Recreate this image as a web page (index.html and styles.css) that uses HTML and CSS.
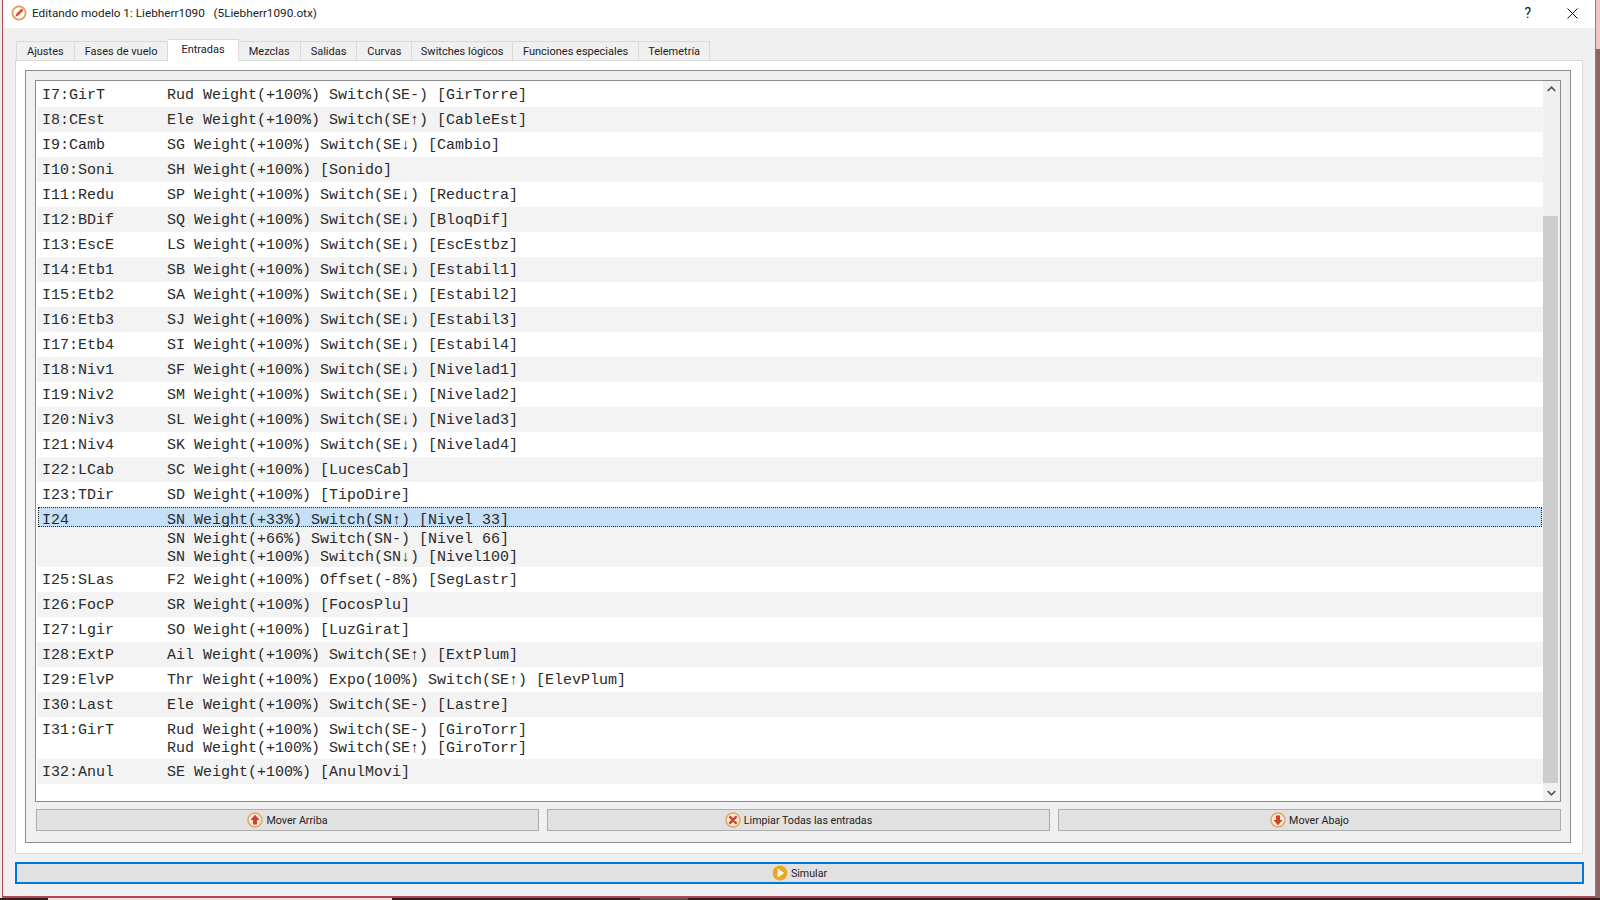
FILE: index.html
```html
<!DOCTYPE html>
<html lang="es">

<head>
    <meta charset="UTF-8">
    <title>Editando modelo 1: Liebherr1090</title>
    <link rel="stylesheet" href="styles.css">
</head>

<body>
    <div class="screen">
        <div class="edge-left"></div>
        <div class="window">
            <div class="titlebar">
                <svg class="app-icon" viewBox="0 0 16 16" width="16" height="16">
                    <circle cx="8" cy="8" r="6.6" fill="#fff" stroke="#e0a050" stroke-width="1.8" />
                    <path d="M4.5 11.5l1-3 5-5 2 2-5 5z" fill="#d9553f" />
                    <path d="M4.5 11.5l.5-1.6 1.1 1.1z" fill="#7a2a20" />
                </svg>
                <span class="title-text">Editando modelo 1: Liebherr1090 &nbsp;&nbsp;(5Liebherr1090.otx)</span>
                <span class="help-btn">?</span>
                <svg class="close-btn" viewBox="0 0 11 11" width="11" height="11">
                    <path d="M0.5 0.5l10 10M10.5 0.5l-10 10" stroke="#111" stroke-width="1" fill="none" />
                </svg>
            </div>

            <div class="client">
                <div class="tabs">
                    <div class="tab">Ajustes</div>
                    <div class="tab">Fases de vuelo</div>
                    <div class="tab active">Entradas</div>
                    <div class="tab">Mezclas</div>
                    <div class="tab">Salidas</div>
                    <div class="tab">Curvas</div>
                    <div class="tab tab-switches">Switches lógicos</div>
                    <div class="tab">Funciones especiales</div>
                    <div class="tab tab-telemetry">Telemetría</div>
                </div>

                <div class="tab-pane">
                    <div class="group">
                        <div class="list-box">
                            <div class="rows">
                                <div class="row"><div class="name">I7:GirT</div><div class="lines"><div>Rud Weight(+100%) Switch(SE-) [GirTorre]</div></div></div>
                                <div class="row"><div class="name">I8:CEst</div><div class="lines"><div>Ele Weight(+100%) Switch(SE↑) [CableEst]</div></div></div>
                                <div class="row"><div class="name">I9:Camb</div><div class="lines"><div>SG Weight(+100%) Switch(SE↓) [Cambio]</div></div></div>
                                <div class="row"><div class="name">I10:Soni</div><div class="lines"><div>SH Weight(+100%) [Sonido]</div></div></div>
                                <div class="row"><div class="name">I11:Redu</div><div class="lines"><div>SP Weight(+100%) Switch(SE↓) [Reductra]</div></div></div>
                                <div class="row"><div class="name">I12:BDif</div><div class="lines"><div>SQ Weight(+100%) Switch(SE↓) [BloqDif]</div></div></div>
                                <div class="row"><div class="name">I13:EscE</div><div class="lines"><div>LS Weight(+100%) Switch(SE↓) [EscEstbz]</div></div></div>
                                <div class="row"><div class="name">I14:Etb1</div><div class="lines"><div>SB Weight(+100%) Switch(SE↓) [Estabil1]</div></div></div>
                                <div class="row"><div class="name">I15:Etb2</div><div class="lines"><div>SA Weight(+100%) Switch(SE↓) [Estabil2]</div></div></div>
                                <div class="row"><div class="name">I16:Etb3</div><div class="lines"><div>SJ Weight(+100%) Switch(SE↓) [Estabil3]</div></div></div>
                                <div class="row"><div class="name">I17:Etb4</div><div class="lines"><div>SI Weight(+100%) Switch(SE↓) [Estabil4]</div></div></div>
                                <div class="row"><div class="name">I18:Niv1</div><div class="lines"><div>SF Weight(+100%) Switch(SE↓) [Nivelad1]</div></div></div>
                                <div class="row"><div class="name">I19:Niv2</div><div class="lines"><div>SM Weight(+100%) Switch(SE↓) [Nivelad2]</div></div></div>
                                <div class="row"><div class="name">I20:Niv3</div><div class="lines"><div>SL Weight(+100%) Switch(SE↓) [Nivelad3]</div></div></div>
                                <div class="row"><div class="name">I21:Niv4</div><div class="lines"><div>SK Weight(+100%) Switch(SE↓) [Nivelad4]</div></div></div>
                                <div class="row"><div class="name">I22:LCab</div><div class="lines"><div>SC Weight(+100%) [LucesCab]</div></div></div>
                                <div class="row"><div class="name">I23:TDir</div><div class="lines"><div>SD Weight(+100%) [TipoDire]</div></div></div>
                                <div class="row multi">
                                    <div class="selected-line"><div class="name">I24</div><div class="lines"><div>SN Weight(+33%) Switch(SN↑) [Nivel 33]</div></div></div>
                                    <div class="row-rest">
                                        <div class="lines">
                                            <div>SN Weight(+66%) Switch(SN-) [Nivel 66]</div>
                                            <div>SN Weight(+100%) Switch(SN↓) [Nivel100]</div>
                                        </div>
                                    </div>
                                </div>
                                <div class="row"><div class="name">I25:SLas</div><div class="lines"><div>F2 Weight(+100%) Offset(-8%) [SegLastr]</div></div></div>
                                <div class="row"><div class="name">I26:FocP</div><div class="lines"><div>SR Weight(+100%) [FocosPlu]</div></div></div>
                                <div class="row"><div class="name">I27:Lgir</div><div class="lines"><div>SO Weight(+100%) [LuzGirat]</div></div></div>
                                <div class="row"><div class="name">I28:ExtP</div><div class="lines"><div>Ail Weight(+100%) Switch(SE↑) [ExtPlum]</div></div></div>
                                <div class="row"><div class="name">I29:ElvP</div><div class="lines"><div>Thr Weight(+100%) Expo(100%) Switch(SE↑) [ElevPlum]</div></div></div>
                                <div class="row"><div class="name">I30:Last</div><div class="lines"><div>Ele Weight(+100%) Switch(SE-) [Lastre]</div></div></div>
                                <div class="row two"><div class="name">I31:GirT</div><div class="lines"><div>Rud Weight(+100%) Switch(SE-) [GiroTorr]</div><div>Rud Weight(+100%) Switch(SE↑) [GiroTorr]</div></div></div>
                                <div class="row"><div class="name">I32:Anul</div><div class="lines"><div>SE Weight(+100%) [AnulMovi]</div></div></div>
                            </div>
                            <div class="scrollbar">
                                <svg class="scroll-arrow" viewBox="0 0 9 6" width="9" height="6"><path d="M0.7 5L4.5 1.2 8.3 5" fill="none" stroke="#505050" stroke-width="1.6" /></svg>
                                <div class="track"><div class="thumb"></div></div>
                                <svg class="scroll-arrow" viewBox="0 0 9 6" width="9" height="6"><path d="M0.7 1L4.5 4.8 8.3 1" fill="none" stroke="#505050" stroke-width="1.6" /></svg>
                            </div>
                        </div>

                        <div class="button-row">
                            <div class="btn">
                                <svg class="btn-icon" viewBox="0 0 16 16" width="16" height="16">
                                    <circle cx="8" cy="8" r="7" fill="#f4ead8" stroke="#dfa868" stroke-width="1.6" />
                                    <path d="M8 2.8L12.6 8H10v4.6H6V8H3.4z" fill="#d5402e" />
                                </svg>
                                <span>Mover Arriba</span>
                            </div>
                            <div class="btn">
                                <svg class="btn-icon" viewBox="0 0 16 16" width="16" height="16">
                                    <circle cx="8" cy="8" r="7" fill="#f4ead8" stroke="#dfa868" stroke-width="1.6" />
                                    <path d="M5.2 5.2l5.6 5.6M10.8 5.2l-5.6 5.6" stroke="#d5402e" stroke-width="2.6" stroke-linecap="round" />
                                </svg>
                                <span>Limpiar Todas las entradas</span>
                            </div>
                            <div class="btn">
                                <svg class="btn-icon" viewBox="0 0 16 16" width="16" height="16">
                                    <circle cx="8" cy="8" r="7" fill="#f4ead8" stroke="#dfa868" stroke-width="1.6" />
                                    <path d="M8 13.2L3.4 8H6V3.4h4V8h2.6z" fill="#d5402e" />
                                </svg>
                                <span>Mover Abajo</span>
                            </div>
                        </div>
                    </div>
                </div>

                <div class="simulate">
                    <svg class="btn-icon" viewBox="0 0 16 16" width="16" height="16">
                        <circle cx="8" cy="8" r="7.4" fill="#e8a820" />
                        <path d="M5.6 3.6L12.4 8l-6.8 4.4z" fill="#fdf6e0" />
                    </svg>
                    <span>Simular</span>
                </div>
            </div>
        </div>
        <div class="edge-right">
            <div class="edge-right-top"></div>
        </div>
    </div>
    <div class="desktop-strip">
        <div class="strip-dark strip-a"></div>
        <div class="strip-light"></div>
        <div class="strip-dark strip-b"></div>
        <div class="strip-grey"></div>
        <div class="strip-dark strip-c"></div>
    </div>
</body>

</html>
```

FILE: styles.css
```css
html,
body {
    margin: 0;
    padding: 0;
    width: 1600px;
    height: 900px;
    overflow: hidden;
    background: #2a2222;
}

.screen {
    display: flex;
    height: 898px;
}

.edge-left {
    width: 2px;
    background: #ececec;
}

.edge-right {
    width: 4px;
    background: #8e6464;
}

.edge-right-top {
    height: 49px;
    background: #f6c4c4;
}

.desktop-strip {
    display: flex;
    height: 2px;
}

.strip-dark {
    background: #2a2222;
}

.strip-a {
    width: 48px;
}

.strip-light {
    width: 344px;
    background: #e8e8e8;
}

.strip-b {
    width: 248px;
}

.strip-grey {
    width: 48px;
    background: #555;
}

.strip-c {
    flex: 1;
}

.window {
    width: 1594px;
    height: 898px;
    box-sizing: border-box;
    border-left: 1px solid #b5474f;
    border-right: 1px solid #c9646a;
    border-bottom: 2px solid #b5474f;
    display: flex;
    flex-direction: column;
    font-family: Roboto, "Liberation Sans", sans-serif;
    font-size: 10.7px;
    color: #222;
}

.titlebar {
    height: 28px;
    box-sizing: border-box;
    background: #fff;
    display: flex;
    align-items: center;
    padding: 0 17px 2px 8px;
    flex-shrink: 0;
}

.app-icon {
    margin-right: 5px;
}

.title-text {
    flex: 1;
    font-size: 11.75px;
    white-space: pre;
}

.help-btn {
    font-size: 14px;
    margin-right: 36px;
    color: #111;
}

.client {
    flex: 1;
    background: #f0f0f0;
    padding: 11px 11px 0 12px;
    display: flex;
    flex-direction: column;
}

.tabs {
    display: flex;
    align-items: flex-end;
    height: 22px;
    padding-left: 1px;
    margin-bottom: -1px;
    position: relative;
    z-index: 1;
}

.tab {
    height: 20px;
    line-height: 19px;
    padding: 0 10px;
    background: #f0f0f0;
    border: 1px solid #d9d9d9;
    border-left: none;
    box-sizing: border-box;
    font-size: 11px;
}

.tab:first-child {
    border-left: 1px solid #d9d9d9;
}

.tab.active {
    height: 22px;
    padding: 0 13px;
    background: #fff;
    border-bottom-color: #fff;
}

.tab-switches {
    padding: 0 8.5px;
}

.tab-telemetry {
    padding: 0 9px;
}

.tab-pane {
    height: 794px;
    margin-right: 1px;
    box-sizing: border-box;
    background: #fff;
    border: 1px solid #d9d9d9;
    padding: 9px 11px 10px 9px;
}

.group {
    height: 100%;
    box-sizing: border-box;
    background: #f0f0f0;
    border: 1px solid #8c8c8c;
    padding: 9px 9px 10px 9px;
    display: flex;
    flex-direction: column;
}

.list-box {
    height: 722px;
    box-sizing: border-box;
    background: #fff;
    border: 1px solid #8c8c8c;
    display: flex;
    padding-top: 1px;
}

.rows {
    flex: 1;
    font-family: "Liberation Mono", monospace;
    font-size: 15px;
    color: #2a2a2a;
    padding-left: 1px;
}

.row {
    display: flex;
    height: 25px;
    box-sizing: border-box;
    padding: 5px 0 2px;
    line-height: 18px;
}

.row:nth-child(even) {
    background: #f3f3f3;
}

.row.two {
    height: 42px;
}

.row.multi {
    display: block;
    height: 60px;
    padding: 0;
}

.selected-line {
    display: flex;
    height: 20px;
    box-sizing: border-box;
    background: #c4dff6;
    border: 1px dotted #222;
    margin: 0 1px;
    padding-top: 4px;
    line-height: 18px;
}

.selected-line .name {
    width: 128px;
    padding-left: 3px;
}

.row-rest {
    display: flex;
    padding: 4px 0 0 130px;
}

.name {
    width: 130px;
    padding-left: 5px;
    box-sizing: border-box;
    flex-shrink: 0;
}

.lines > div {
    white-space: pre;
}

.scrollbar {
    width: 17px;
    background: #f0f0f0;
    display: flex;
    flex-direction: column;
    align-items: center;
    margin-top: -1px;
}

.scroll-arrow {
    flex-shrink: 0;
    margin: 5px 0;
}

.track {
    flex: 1;
    width: 100%;
    padding-top: 119px;
    padding-bottom: 2px;
    box-sizing: border-box;
}

.thumb {
    height: 100%;
    background: #cdcdcd;
    margin-right: 2px;
}

.button-row {
    display: flex;
    gap: 8px;
    margin-top: 7px;
    margin-left: 1px;
}

.btn {
    flex: 1;
    height: 22px;
    box-sizing: border-box;
    background: #e1e1e1;
    border: 1px solid #adadad;
    display: flex;
    align-items: center;
    justify-content: center;
}

.btn-icon {
    margin-right: 3px;
}

.simulate {
    margin-top: 8px;
    height: 22px;
    box-sizing: border-box;
    background: #e1e1e1;
    border: 2px solid #0078d7;
    display: flex;
    align-items: center;
    justify-content: center;
}
```
